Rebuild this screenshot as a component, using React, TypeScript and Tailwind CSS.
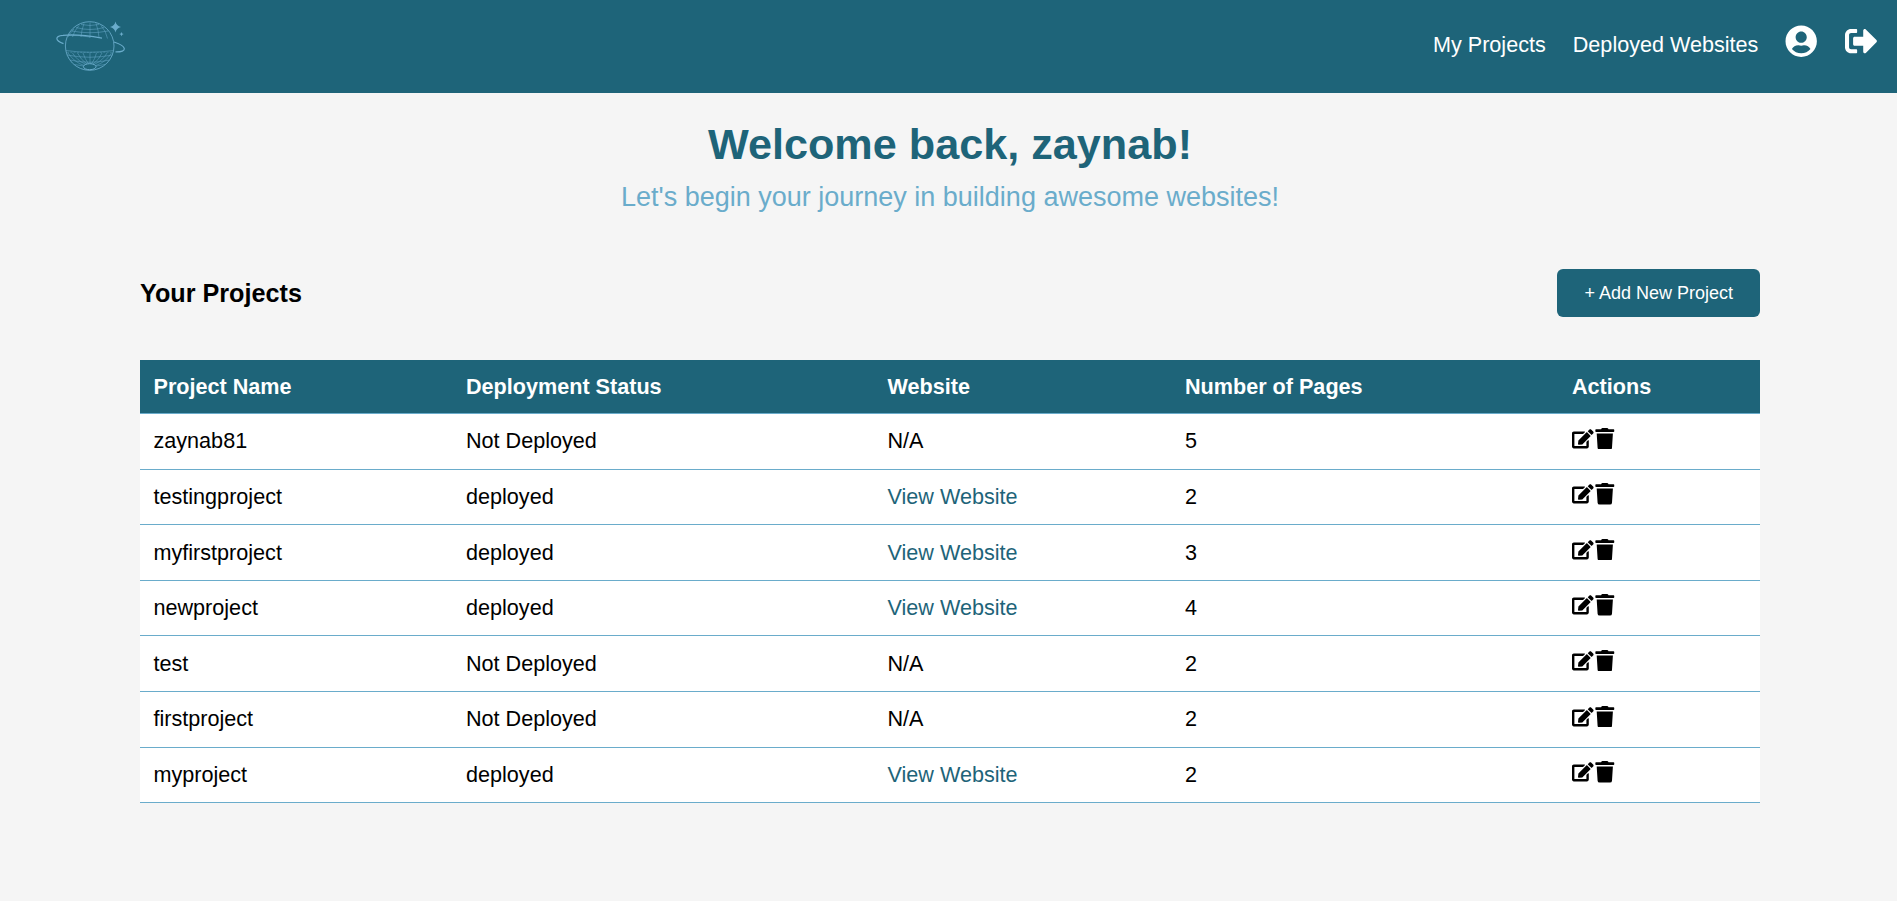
import { FaEdit, FaSignOutAlt, FaTrash, FaUserCircle } from "react-icons/fa";

type Project = { name: string; deployed: boolean; pages: number; height: string; inset: string };

const projects: Project[] = [
  { name: "zaynab81", deployed: false, pages: 5, height: "h-[56px]", inset: "pb-[3px]" },
  { name: "testingproject", deployed: true, pages: 2, height: "h-[55px]", inset: "pb-px" },
  { name: "myfirstproject", deployed: true, pages: 3, height: "h-[56px]", inset: "pb-px" },
  { name: "newproject", deployed: true, pages: 4, height: "h-[55px]", inset: "pb-px" },
  { name: "test", deployed: false, pages: 2, height: "h-[56px]", inset: "pb-px" },
  { name: "firstproject", deployed: false, pages: 2, height: "h-[56px]", inset: "pb-[3px]" },
  { name: "myproject", deployed: true, pages: 2, height: "h-[55px]", inset: "pb-px" },
];

function Logo() {
  return (
    <svg viewBox="0 0 74 60" className="h-[60px] w-[74px]" fill="none" stroke="#6aaccb">
      <circle cx="35.7" cy="29" r="24.3" strokeWidth="1" strokeOpacity="0.85" />
      <g strokeWidth="0.7" strokeOpacity="0.7">
        <path d="M36 5.500V21M30 6.500Q27.500 13 27 20M42 6.500Q44.500 13 45 20.500M25 8.500Q20 14 18.500 20M47 8.500Q52 14 53.500 21.500M20 12Q16 16 14 20" />
        <path d="M27 7.500Q36 9.500 45 7.500M22 10.500Q36 14.500 50 10.500M18 14Q36 17.500 54 14M14.500 18.500Q25 18 36 20" />
        <path d="M12 33.500Q36 37 59.500 33.500M13 38Q36 42.500 58.500 38M16 43Q36 47.500 55.500 43M20.500 47.500Q36 51 51 47.500" />
        <path d="M14 36Q20 45 30 48.500M18.500 36Q23 43.500 32 47.500M23.500 36Q27 43 33 47M29 36Q31 42 34.500 47M36 36V47M42.500 36Q41 42 37.500 47M48 36Q45 43 39 47M53 36Q49 43.500 40 47.500M57.500 36Q52 45 42 48.500" />
      </g>
      <path d="M13 35.300H58" strokeWidth="1.200" strokeOpacity="0.3" strokeDasharray="2 1.300" />
      <ellipse cx="35.700" cy="49.700" rx="6.300" ry="3" fill="#1e6479" strokeWidth="1" />
      <path d="M9.500 26.600C1 23.600 0.500 19.100 9 18.300C19 17.100 34 18.600 48 21.100" strokeWidth="1.200" />
      <path d="M60 25C73 29.200 74 35.200 61.500 34.900" strokeWidth="1.200" />
      <path d="M61.500 4.500Q62.300 8.900 67 9.900Q62.300 10.900 61.500 15.400Q60.700 10.900 56 9.900Q60.700 8.900 61.500 4.500Z" fill="#6aaccb" stroke="none" />
      <path d="M67.500 14.900Q67.800 16.900 69.700 17.100Q67.800 17.300 67.500 19.300Q67.200 17.300 65.300 17.100Q67.200 16.900 67.500 14.900Z" fill="#6aaccb" stroke="none" />
    </svg>
  );
}

function Header() {
  return (
    <header className="flex h-[93px] items-center justify-between bg-[#1e6479] pl-[54px] pr-[19.8px] text-white">
      <Logo />
      <nav className="flex items-center gap-[27px] pb-[10px] text-[21.6px] leading-[25px]">
        <a href="#projects" className="pt-[6px]">My Projects</a>
        <a href="#deployed" className="pt-[6px]">Deployed Websites</a>
        <FaUserCircle className="size-[32.4px]" />
        <FaSignOutAlt className="size-[32.4px]" />
      </nav>
    </header>
  );
}

function ProjectRow({ project }: { project: Project }) {
  const cell = `border-b border-[#6aaccb] pl-[13.5px] ${project.inset}`;
  return (
    <tr className={`${project.height} bg-white`}>
      <td className={cell}>{project.name}</td>
      <td className={cell}>{project.deployed ? "deployed" : "Not Deployed"}</td>
      <td className={cell}>
        {project.deployed ? <a href="#site" className="text-[#1e6479]">View Website</a> : "N/A"}
      </td>
      <td className={cell}>{project.pages}</td>
      <td className="border-b border-[#6aaccb] pb-px pl-[13.5px]">
        <div className="flex pb-[5px]">
          <FaEdit />
          <FaTrash />
        </div>
      </td>
    </tr>
  );
}

export default function App() {
  return (
    <div className="min-h-[901px] bg-[#f5f5f5] font-['Liberation_Sans',Arial,sans-serif] text-black">
      <Header />
      <main className="ml-[140px] w-[1620px]">
        <section className="pt-[26px] text-center">
          <h1 className="text-[43.2px] leading-[50px] font-bold text-[#1e6479]">Welcome back, zaynab!</h1>
          <p className="mt-[13px] text-[27px] leading-[31px] text-[#6aaccb]">Let's begin your journey in building awesome websites!</p>
        </section>
        <section>
          <div className="mt-[56px] flex h-[48px] items-center justify-between">
            <h2 className="text-[25.2px] leading-[29px] font-bold">Your Projects</h2>
            <button className="h-[48px] rounded-[6px] bg-[#1e6479] px-[27px] text-[18px] leading-[21px] text-white">+ Add New Project</button>
          </div>
          <table className="mt-[43px] w-[1620px] table-fixed border-separate border-spacing-0 text-left text-[21.6px] leading-[25px]">
            <colgroup>
              <col className="w-[312.5px]" />
              <col className="w-[421.5px]" />
              <col className="w-[297.5px]" />
              <col className="w-[387px]" />
              <col />
            </colgroup>
            <thead>
              <tr className="h-[54px] bg-[#1e6479] text-white">
                <th className="border-b border-[#6aaccb] pl-[13.5px]">Project Name</th>
                <th className="border-b border-[#6aaccb] pl-[13.5px]">Deployment Status</th>
                <th className="border-b border-[#6aaccb] pl-[13.5px]">Website</th>
                <th className="border-b border-[#6aaccb] pl-[13.5px]">Number of Pages</th>
                <th className="border-b border-[#6aaccb] pl-[13.5px]">Actions</th>
              </tr>
            </thead>
            <tbody>
              {projects.map((project) => (
                <ProjectRow key={project.name} project={project} />
              ))}
            </tbody>
          </table>
        </section>
      </main>
    </div>
  );
}
